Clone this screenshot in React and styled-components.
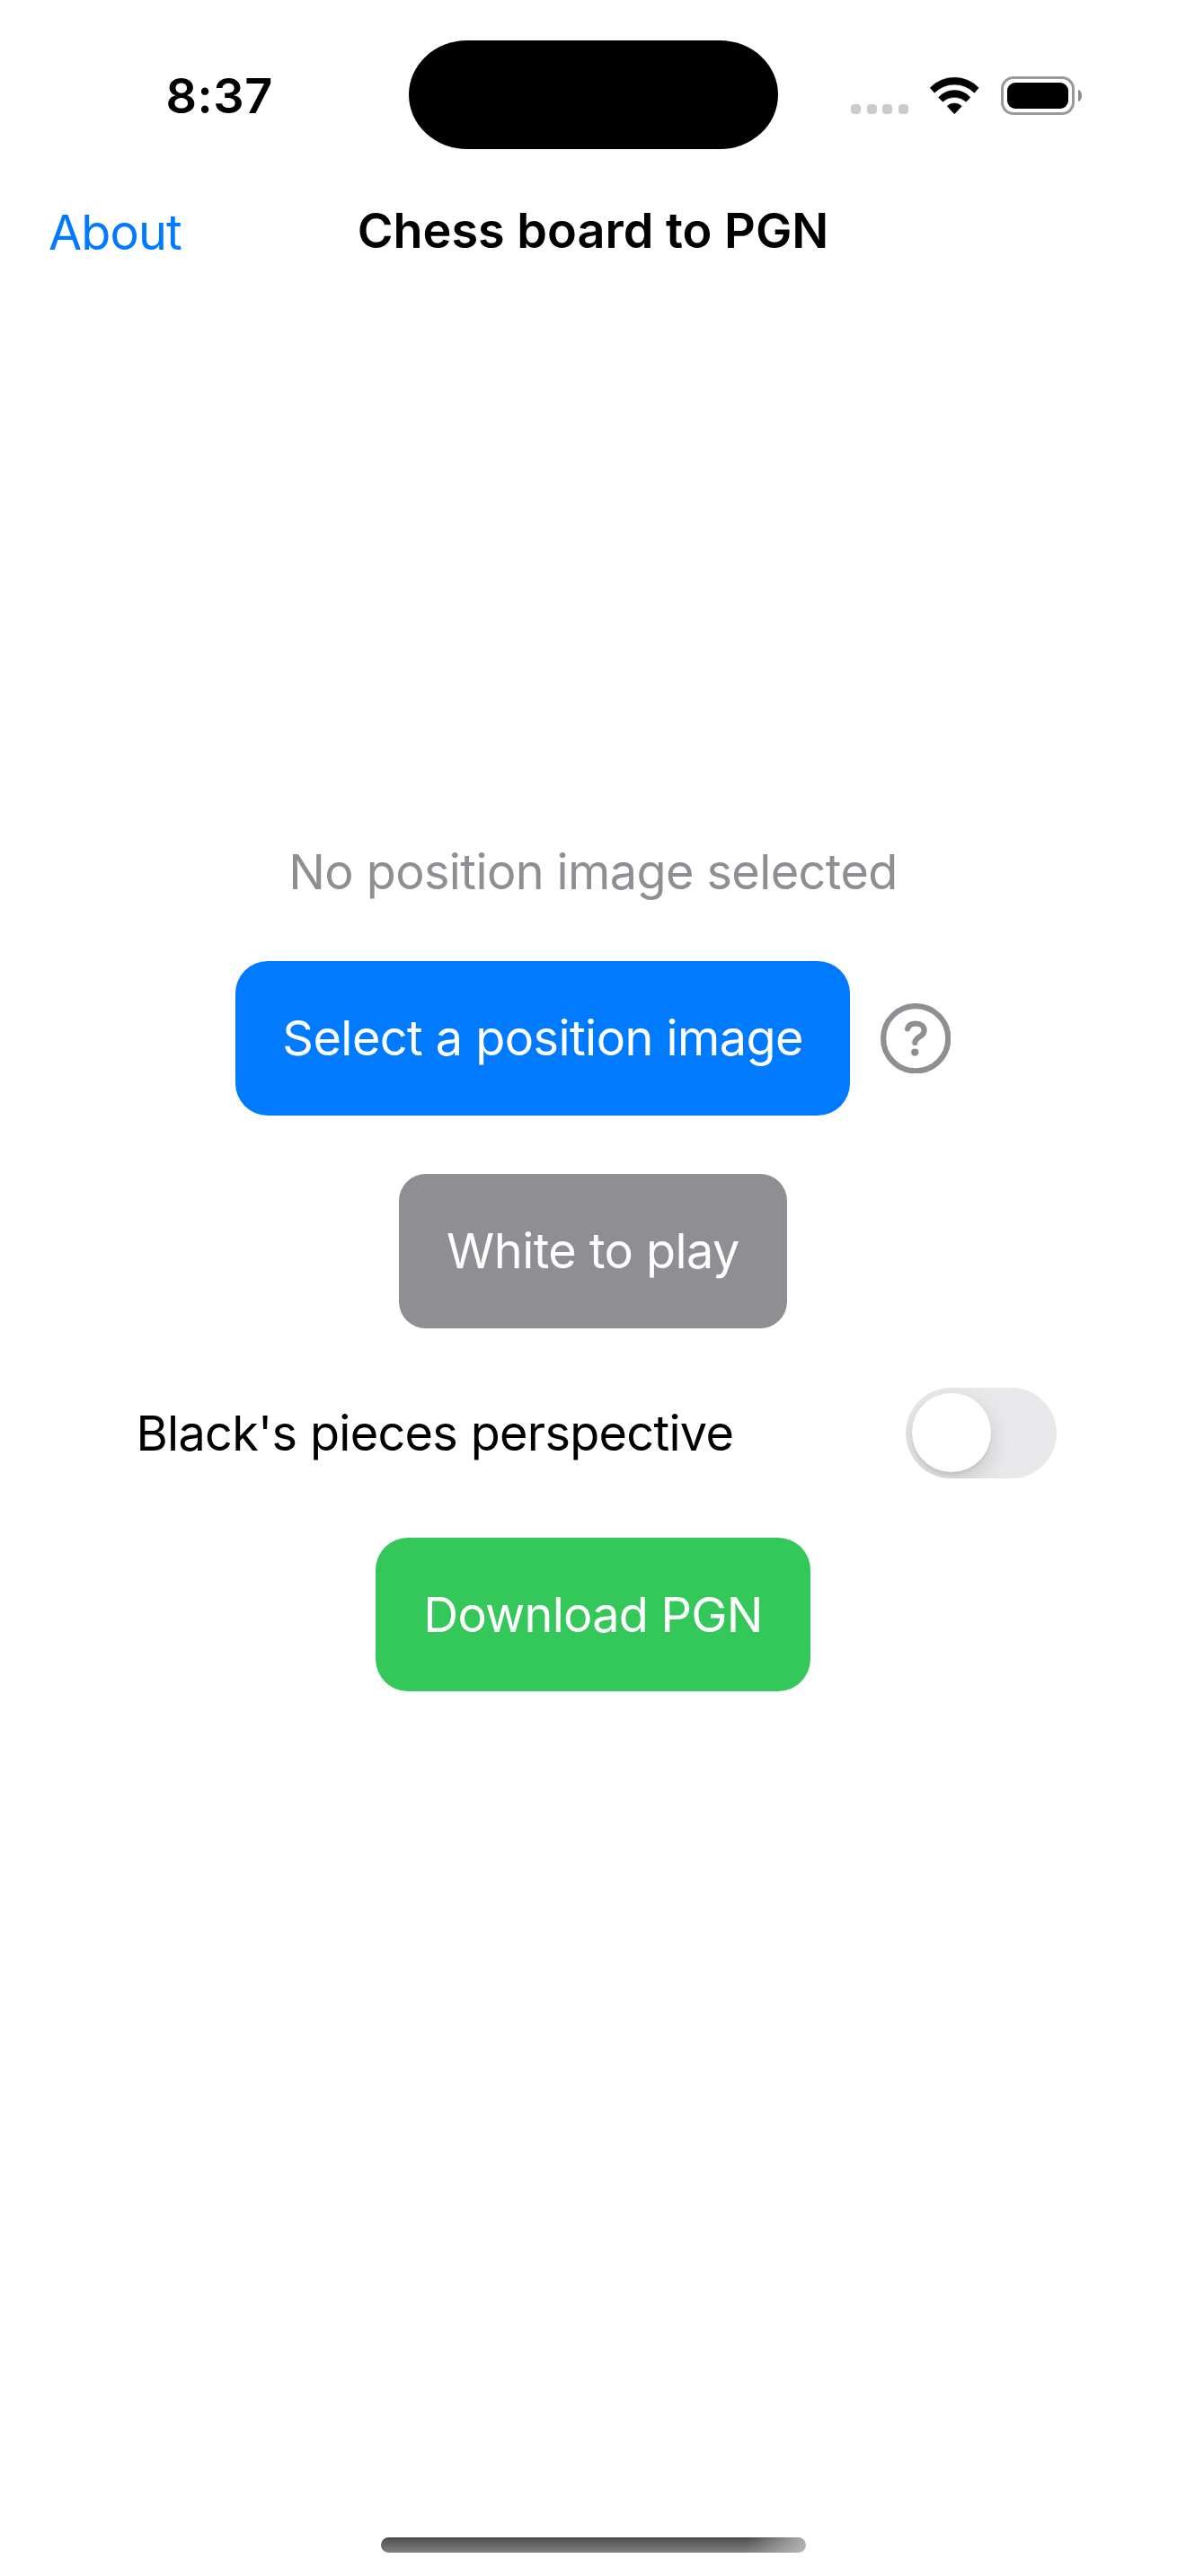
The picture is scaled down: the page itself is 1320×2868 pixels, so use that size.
import React, { useState } from "react";
import styled, { createGlobalStyle } from "styled-components";

const GlobalStyle = createGlobalStyle`
  *, *::before, *::after { box-sizing: border-box; }
  body {
    margin: 0;
    background: #fff;
    color: #000;
    font-family: Inter, "Liberation Sans", sans-serif;
    font-size: 54px;
  }
  button { font: inherit; border: 0; padding: 0; background: none; cursor: pointer; }
`;

const Screen = styled.div`
  display: flex;
  flex-direction: column;
  width: 1320px;
  height: 2868px;
  background: #fff;
  overflow: hidden;
`;

const StatusBar = styled.header`
  display: grid;
  grid-template-columns: 454.5px 411.5px 1fr;
  align-items: start;
  height: 205px;
  padding-top: 45px;
`;

const Time = styled.span`
  padding-left: 184.5px;
  font-weight: 600;
  line-height: 124px;
  letter-spacing: 0.5px;
`;

const Island = styled.div`
  height: 121.3px;
  border-radius: 65px / 60.6px;
  background: #000;
`;

const Indicators = styled.div`
  display: flex;
  align-items: flex-end;
  height: 83px;
  padding-left: 81px;
`;

const Signal = styled.div`
  display: flex;
  gap: 6.5px;
  padding-bottom: 1px;
  margin-right: 24.7px;
`;

const SignalDot = styled.i`
  width: 11px;
  height: 11.3px;
  border-radius: 4px;
  background: #cbcbcb;
`;

const WifiSvg = styled.svg`
  width: 54.5px;
  height: 41px;
  margin: 0 24.3px 1px 0;
  overflow: visible;
`;

const Battery = styled.div`
  display: flex;
  align-items: center;
  gap: 4px;
`;

const BatteryCase = styled.div`
  width: 82px;
  height: 43px;
  padding: 4px;
  border: 3px solid #999;
  border-radius: 14px;
`;

const BatteryLevel = styled.div`
  height: 100%;
  border-radius: 9px;
  background: #000;
`;

const BatteryTip = styled.div`
  width: 4px;
  height: 13px;
  border-radius: 0 4px 4px 0 / 0 6.5px 6.5px 0;
  background: #8c8c8c;
`;

const NavBar = styled.nav`
  display: grid;
  grid-template-columns: 1fr auto 1fr;
  align-items: center;
  height: 106px;
  padding: 0 54px;
`;

const NavLink = styled.button`
  justify-self: start;
  color: #007aff;
  letter-spacing: -0.9px;
`;

const Title = styled.h1`
  margin: 0 0 4px;
  font-size: 54px;
  font-weight: 600;
`;

const Content = styled.main`
  display: flex;
  flex: 1;
  flex-direction: column;
  align-items: center;
  gap: 66px;
  padding-top: 626px;
`;

const Hint = styled.p`
  margin: 0;
  color: #8e8e93;
  line-height: 67px;
  letter-spacing: -0.6px;
`;

const PickerRow = styled.div`
  display: flex;
  align-items: center;
  gap: 33.3px;
  margin-bottom: -0.5px;
`;

const ActionButton = styled.button`
  width: ${(p) => p.$width}px;
  height: 171.5px;
  border-radius: ${(p) => p.$radius}px;
  background: ${(p) => p.$color};
  color: #fff;
  letter-spacing: ${(p) => p.$tracking}px;
  white-space: nowrap;
`;

const HelpButton = styled.button`
  display: flex;
  width: 78.4px;
  height: 78.4px;
  color: #8e8e93;
`;

const ToggleRow = styled.label`
  display: flex;
  align-items: center;
  justify-content: space-between;
  width: 100%;
  height: 101.3px;
  padding: 0 144.3px 0 151.4px;
`;

const ToggleText = styled.span`
  letter-spacing: -0.7px;
`;

const Track = styled.button`
  display: flex;
  align-items: center;
  justify-content: ${(p) => (p.$on ? "flex-end" : "flex-start")};
  width: 167.7px;
  height: 101.3px;
  padding: 0 6.6px;
  border-radius: 51px;
  background: ${(p) => (p.$on ? "#34c759" : "#e9e9eb")};
  overflow: hidden;
`;

const Knob = styled.span`
  width: 88.5px;
  height: 88.5px;
  border-radius: 50%;
  background: #fff;
  box-shadow: 0 10px 26px rgba(0, 0, 0, 0.15), 0 3px 3px rgba(0, 0, 0, 0.06);
`;

const HomeIndicator = styled.div`
  align-self: center;
  width: 473px;
  height: 17px;
  margin-bottom: 26px;
  border-radius: 9px;
  background:
    linear-gradient(100deg, rgba(184, 184, 184, 0) 86%, rgba(184, 184, 184, 0.95) 100%),
    linear-gradient(#474747, #585858 20%, #808080);
`;

function WifiIcon() {
  return (
    <WifiSvg viewBox="0 0 54.5 41" fill="#000" stroke="#000" strokeWidth="0.6" strokeLinejoin="round">
      <path d="M.3 11.7A37.6 37.6 0 0 1 54.2 11.7L49.5 17.2A31.5 31.5 0 0 0 5 17.2Z" />
      <path d="M9.6 22.4A23.8 23.8 0 0 1 44.9 22.4L40.2 27.2A19.5 19.5 0 0 0 14.3 27.2Z" />
      <path d="M19.2 32.3A11.5 11.5 0 0 1 35.3 32.3L27.25 40.7Z" />
    </WifiSvg>
  );
}

function HelpIcon() {
  return (
    <svg width="78.4" height="78.4" viewBox="-39.2 -39.2 78.4 78.4" fill="none" stroke="currentColor" strokeLinecap="round">
      <circle r="36.1" strokeWidth="6.2" />
      <path
        d="M-9.1 -10.8C-8 -14.8 -4.6 -16.6 0 -16.6C5.6 -16.6 9.4 -13.7 9.4 -9.3C9.4 -5.5 7.2 -3.7 4 -1.7C.6 .5 -.9 1.9 -.9 4.7"
        strokeWidth="6.2"
      />
      <circle cx="-.9" cy="15.4" r="4.1" fill="currentColor" stroke="none" />
    </svg>
  );
}

export default function App() {
  const [whiteToPlay, setWhiteToPlay] = useState(true);
  const [flipped, setFlipped] = useState(false);

  return (
    <>
      <GlobalStyle />
      <Screen>
        <StatusBar>
          <Time>8:37</Time>
          <Island />
          <Indicators>
            <Signal>
              <SignalDot />
              <SignalDot />
              <SignalDot />
              <SignalDot />
            </Signal>
            <WifiIcon />
            <Battery>
              <BatteryCase>
                <BatteryLevel />
              </BatteryCase>
              <BatteryTip />
            </Battery>
          </Indicators>
        </StatusBar>
        <NavBar>
          <NavLink>About</NavLink>
          <Title>Chess board to PGN</Title>
        </NavBar>
        <Content>
          <Hint>No position image selected</Hint>
          <PickerRow>
            <ActionButton $width={684.6} $radius={36} $color="#007aff" $tracking={-0.56}>
              Select a position image
            </ActionButton>
            <HelpButton aria-label="Help">
              <HelpIcon />
            </HelpButton>
          </PickerRow>
          <ActionButton
            $width={432}
            $radius={30}
            $color="#8e8e93"
            $tracking={-0.53}
            onClick={() => setWhiteToPlay(!whiteToPlay)}
          >
            {whiteToPlay ? "White to play" : "Black to play"}
          </ActionButton>
          <ToggleRow>
            <ToggleText>Black's pieces perspective</ToggleText>
            <Track role="switch" aria-checked={flipped} $on={flipped} onClick={() => setFlipped(!flipped)}>
              <Knob />
            </Track>
          </ToggleRow>
          <ActionButton $width={484} $radius={36} $color="#34c759" $tracking={-0.75}>
            Download PGN
          </ActionButton>
        </Content>
        <HomeIndicator />
      </Screen>
    </>
  );
}
